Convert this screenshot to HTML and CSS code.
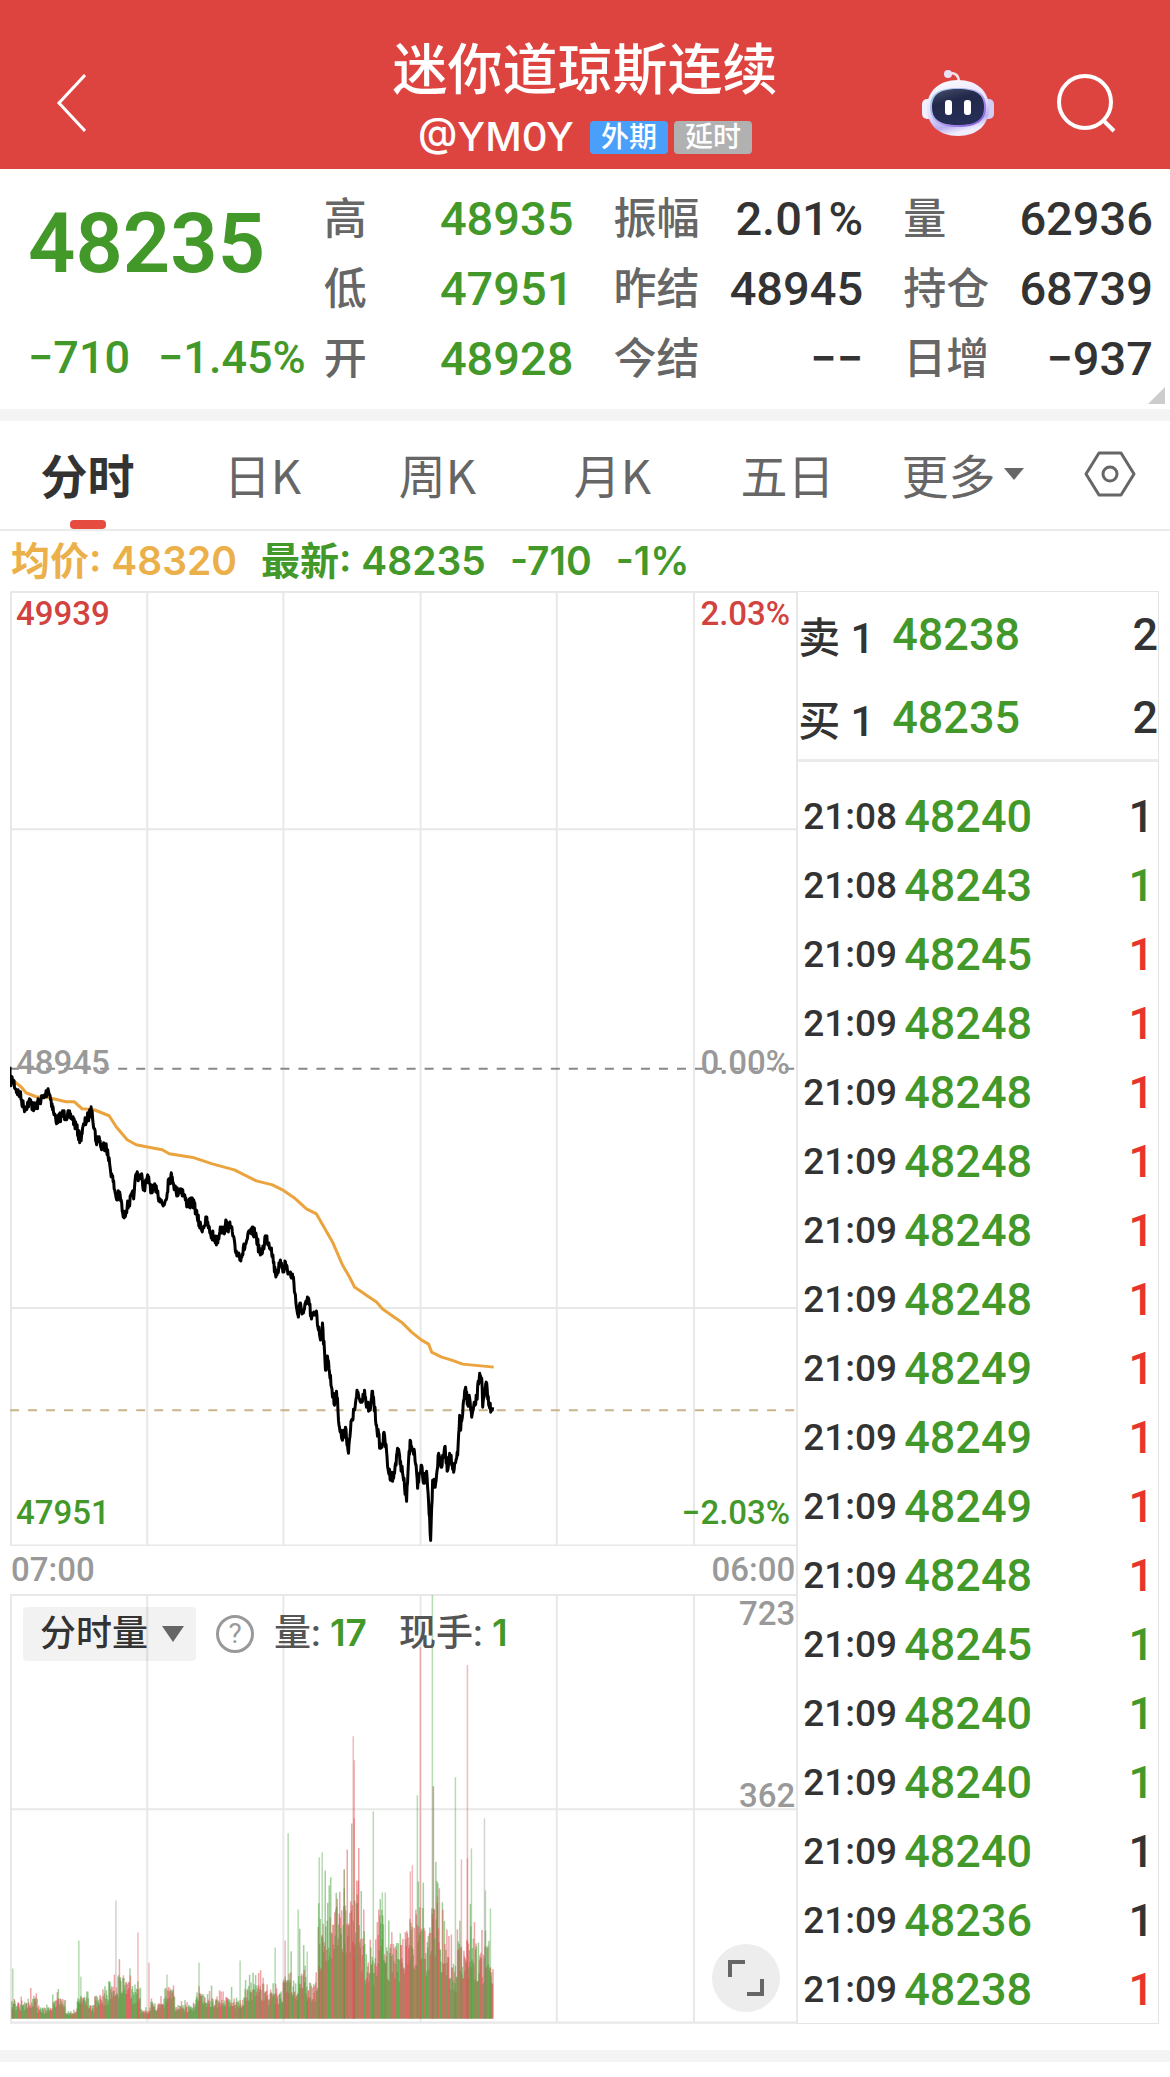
FILE: index.html
```html
<!DOCTYPE html>
<html lang="zh-CN">
<head>
    <meta charset="UTF-8">
    <meta name="viewport" content="width=device-width, initial-scale=1.0">
    <title>迷你道琼斯连续 @YM0Y</title>
    <link rel="stylesheet" href="styles.css">
</head>
<body>
    <header class="header">
        <a class="back" href="#" aria-label="返回">
            <svg width="32" height="60" viewBox="0 0 32 60"><path d="M31 2 5 30l26 28" fill="none" stroke="#fff" stroke-width="3"/></svg>
        </a>
        <div class="title">
            <h1>迷你道琼斯连续</h1>
            <div class="subtitle">
                <span class="code">@YM0Y</span>
                <span class="tag tag-blue">外期</span>
                <span class="tag tag-gray">延时</span>
            </div>
        </div>
        <div class="actions">
            <button aria-label="智能助手">
                <svg width="72" height="68" viewBox="0 0 72 68">
                    <defs>
                        <linearGradient id="shell" x1="0" y1="0" x2="0.3" y2="1">
                            <stop offset="0" stop-color="#fff"/>
                            <stop offset="0.6" stop-color="#e2defa"/>
                            <stop offset="0.85" stop-color="#b9aef0"/>
                            <stop offset="1" stop-color="#f0edfc"/>
                        </linearGradient>
                        <linearGradient id="rim" x1="0" y1="0" x2="1" y2="1">
                            <stop offset="0" stop-color="#9fd8ee"/>
                            <stop offset="0.5" stop-color="#b2a6ee"/>
                            <stop offset="1" stop-color="#7a50d6"/>
                        </linearGradient>
                        <linearGradient id="face" x1="0" y1="0" x2="0.4" y2="1">
                            <stop offset="0" stop-color="#4b4f6c"/>
                            <stop offset="0.4" stop-color="#22294a"/>
                            <stop offset="1" stop-color="#252e56"/>
                        </linearGradient>
                    </defs>
                    <path d="M27 4q9-1 10 8" fill="none" stroke="#f3dfe8" stroke-width="2.5"/>
                    <circle cx="26" cy="5" r="4" fill="#e9e2f4"/>
                    <rect x="0" y="30" width="12" height="20" rx="5" fill="#f1effb"/>
                    <rect x="60" y="30" width="12" height="20" rx="5" fill="#d3cdf3"/>
                    <path d="M36 11C55 11 67 22 67 39S55 67 36 67 5 56 5 39 17 11 36 11z" fill="url(#shell)"/>
                    <path d="M36 19c20 0 28 6 28 19s-8 20-28 20S8 51 8 38s8-19 28-19z" fill="url(#rim)"/>
                    <path d="M36 20c19 0 26 6 26 18s-7 18-26 18-26-6-26-18 7-18 26-18z" fill="url(#face)"/>
                    <rect x="23" y="31" width="7" height="15" rx="3" fill="#fff"/>
                    <rect x="42" y="31" width="7" height="15" rx="3" fill="#fff"/>
                </svg>
            </button>
            <button aria-label="搜索">
                <svg width="60" height="60" viewBox="0 0 60 60"><g fill="none" stroke="#fff" stroke-width="4"><circle cx="29" cy="29" r="26"/><path d="m47 47 11 11"/></g></svg>
            </button>
        </div>
    </header>

    <section class="quote">
        <div class="price">
            <div class="last">48235</div>
            <div class="change"><span>−710</span><span>−1.45%</span></div>
        </div>
        <dl class="stats">
            <div><dt>高</dt><dd class="green">48935</dd></div>
            <div><dt>振幅</dt><dd>2.01%</dd></div>
            <div><dt>量</dt><dd>62936</dd></div>
            <div><dt>低</dt><dd class="green">47951</dd></div>
            <div><dt>昨结</dt><dd>48945</dd></div>
            <div><dt>持仓</dt><dd>68739</dd></div>
            <div><dt>开</dt><dd class="green">48928</dd></div>
            <div><dt>今结</dt><dd>−−</dd></div>
            <div><dt>日增</dt><dd>−937</dd></div>
        </dl>
        <svg class="corner" width="17" height="17" viewBox="0 0 17 17"><path d="M17 0v17H0z" fill="#ccc"/></svg>
    </section>

    <nav class="tabs">
        <button class="active">分时</button>
        <button>日K</button>
        <button>周K</button>
        <button>月K</button>
        <button>五日</button>
        <button>更多<svg width="20" height="12" viewBox="0 0 20 12"><path d="M0 0h20L10 12z" fill="#666"/></svg></button>
        <button aria-label="设置">
            <svg width="52" height="46" viewBox="0 0 52 46"><g fill="none" stroke="#666" stroke-width="3"><path d="M15 2h22l13 21-13 21H15L2 23z" stroke-linejoin="round"/><circle cx="26" cy="23" r="7"/></g></svg>
        </button>
    </nav>

    <div class="info">
        <span class="orange">均价: 48320</span>
        <span class="green">最新: 48235</span>
        <span class="green">-710</span>
        <span class="green">-1%</span>
    </div>

    <main class="board">
        <div class="charts">
            <div class="price-chart">
                <svg viewBox="0 0 785 954">
                    <g class="grid">
                        <path d="M0 1H785M0 238H785M0 716H785M0 953H785M1 0V954M137 0V954M273 0V954M410 0V954M546 0V954M683 0V954"/>
                    </g>
                    <path class="zero-line" d="M0 477H785"/>
                    <path class="last-line" d="M0 818H785"/>
                    <polyline id="avg-line" class="avg"/>
                    <polyline id="price-line" class="trend"/>
                </svg>
                <span class="axis top left red">49939</span>
                <span class="axis top right red">2.03%</span>
                <span class="axis middle left">48945</span>
                <span class="axis middle right">0.00%</span>
                <span class="axis bottom left green">47951</span>
                <span class="axis bottom right green">−2.03%</span>
            </div>
            <div class="times"><span>07:00</span><span>06:00</span></div>
            <div class="volume-chart">
                <svg viewBox="0 0 785 429">
                    <g class="grid">
                        <path d="M0 1H785M0 215H785M0 428H785M1 0V429M137 0V429M273 0V429M410 0V429M546 0V429M683 0V429"/>
                    </g>
                    <g id="volume-bars"></g>
                </svg>
                <div class="volume-bar">
                    <label class="picker">
                        <select aria-label="指标"><option>分时量</option><option>持仓量</option></select>
                        <svg width="22" height="16" viewBox="0 0 22 16"><path d="M0 0h22L11 16z" fill="#666"/></svg>
                    </label>
                    <button class="help" aria-label="帮助">?</button>
                    <span>量: <b>17</b></span>
                    <span>现手: <b>1</b></span>
                </div>
                <span class="axis volume-max">723</span>
                <span class="axis volume-mid">362</span>
                <button class="expand" aria-label="全屏">
                    <svg width="36" height="36" viewBox="0 0 36 36"><path d="M2 17V2h15M34 19v15H19" fill="none" stroke="#666" stroke-width="4"/></svg>
                </button>
            </div>
        </div>
        <div class="trades">
            <table class="orders">
                <tr><th>卖 1</th><td class="green">48238</td><td>2</td></tr>
                <tr><th>买 1</th><td class="green">48235</td><td>2</td></tr>
            </table>
            <table class="ticks">
                <tr><th>21:08</th><td>48240</td><td>1</td></tr>
                <tr><th>21:08</th><td>48243</td><td class="green">1</td></tr>
                <tr><th>21:09</th><td>48245</td><td class="up">1</td></tr>
                <tr><th>21:09</th><td>48248</td><td class="up">1</td></tr>
                <tr><th>21:09</th><td>48248</td><td class="up">1</td></tr>
                <tr><th>21:09</th><td>48248</td><td class="up">1</td></tr>
                <tr><th>21:09</th><td>48248</td><td class="up">1</td></tr>
                <tr><th>21:09</th><td>48248</td><td class="up">1</td></tr>
                <tr><th>21:09</th><td>48249</td><td class="up">1</td></tr>
                <tr><th>21:09</th><td>48249</td><td class="up">1</td></tr>
                <tr><th>21:09</th><td>48249</td><td class="up">1</td></tr>
                <tr><th>21:09</th><td>48248</td><td class="up">1</td></tr>
                <tr><th>21:09</th><td>48245</td><td class="green">1</td></tr>
                <tr><th>21:09</th><td>48240</td><td class="green">1</td></tr>
                <tr><th>21:09</th><td>48240</td><td class="green">1</td></tr>
                <tr><th>21:09</th><td>48240</td><td>1</td></tr>
                <tr><th>21:09</th><td>48236</td><td>1</td></tr>
                <tr><th>21:09</th><td>48238</td><td class="up">1</td></tr>
            </table>
        </div>
    </main>
    <div class="divider"></div>
    <script src="chart.js"></script>
</body>
</html>
```

FILE: styles.css
```css
* {
    box-sizing: border-box;
}
body {
    margin: 0;
    background-color: #fff;
    color: #333;
    font-family: Roboto, "Noto Sans CJK SC", sans-serif;
    font-weight: 500;
}
button, select {
    border: none;
    background: none;
    padding: 0;
    margin: 0;
    color: inherit;
    font: inherit;
    cursor: pointer;
}
svg {
    display: block;
}
.green {
    color: #43982a;
}
.red {
    color: #d2423e;
}
.up {
    color: #e8342a;
}
.orange {
    color: #ecb04a;
}
.header {
    display: grid;
    grid-template-columns: 1fr auto 1fr;
    align-items: center;
    padding: 36px 54px 0;
    background-color: #dd4440;
    color: #fff;
}
.back {
    justify-self: start;
}
.title h1 {
    margin: 0;
    font-size: 55px;
    line-height: 69px;
    font-weight: 500;
    text-align: center;
}
.subtitle {
    display: flex;
    align-items: center;
    justify-content: center;
    height: 64px;
    gap: 6px;
}
.code {
    margin-right: 10px;
    font-family: Inter, sans-serif;
    font-size: 40px;
    line-height: 60px;
}
.tag {
    padding: 0 11px;
    border-radius: 4px;
    font-size: 28px;
    line-height: 33px;
}
.tag-blue {
    background-color: #4a9ffb;
}
.tag-gray {
    background-color: #b1b1b1;
}
.actions {
    display: flex;
    align-items: center;
    justify-self: end;
    gap: 62px;
}
.quote {
    position: relative;
    display: flex;
    padding: 15px 17px;
    border-bottom: 12px solid #f4f4f4;
    height: 252px;
}
.price {
    width: 27%;
    padding-left: 11px;
    color: #43982a;
    white-space: nowrap;
}
.last {
    margin-bottom: 20px;
    font-size: 83px;
    line-height: 119px;
    font-weight: 600;
}
.change {
    display: flex;
    gap: 28px;
    font-size: 45px;
    line-height: 70px;
}
.stats {
    display: grid;
    grid-template-columns: repeat(3, 1fr);
    column-gap: 40px;
    width: 73%;
    margin: 0;
}
.stats div {
    display: flex;
    justify-content: space-between;
    line-height: 70px;
}
.stats dt {
    font-size: 43px;
    color: #666;
}
.stats dd {
    margin: 0;
    font-size: 47px;
}
.corner {
    position: absolute;
    right: 5px;
    bottom: 5px;
}
.tabs {
    display: grid;
    grid-template-columns: repeat(6, 175fr) 120fr;
    border-bottom: 2px solid #ebebeb;
    font-family: "Noto Sans CJK SC", sans-serif;
    font-size: 47px;
    line-height: 64px;
    font-weight: 400;
    color: #666;
}
.tabs button {
    position: relative;
    display: flex;
    align-items: center;
    justify-content: center;
    gap: 8px;
    height: 108px;
    padding-bottom: 2px;
    white-space: nowrap;
}
.tabs .active {
    color: #333;
    font-weight: 700;
}
.tabs .active::after {
    content: "";
    position: absolute;
    bottom: 0;
    width: 36px;
    height: 9px;
    border-radius: 4px;
    background-color: #e54b3f;
}
.info {
    display: flex;
    gap: 24px;
    padding: 0 11px;
    font-family: Inter, "Noto Sans CJK SC", sans-serif;
    font-size: 39px;
    font-weight: 600;
    line-height: 60px;
}
.board {
    display: grid;
    grid-template-columns: 13fr 6fr;
    padding: 0 11px 26px 10px;
}
.price-chart, .volume-chart {
    position: relative;
}
.price-chart svg, .volume-chart > svg {
    width: 100%;
}
.grid path {
    fill: none;
    stroke: #e8e8e8;
    stroke-width: 2;
}
.zero-line {
    stroke: #888;
    stroke-width: 2;
    stroke-dasharray: 9 9;
}
.last-line {
    stroke: #c9b48c;
    stroke-width: 2;
    stroke-dasharray: 9 9;
}
.avg {
    fill: none;
    stroke: #eba43d;
    stroke-width: 3;
    stroke-linejoin: round;
}
.trend {
    fill: none;
    stroke: #000;
    stroke-width: 3;
    stroke-linejoin: round;
}
.axis {
    position: absolute;
    font-size: 33px;
    line-height: 40px;
    color: #999;
}
.axis.red {
    color: #d2423e;
}
.axis.green {
    color: #43982a;
}
.left {
    left: 6px;
}
.right {
    right: 6px;
}
.top {
    top: 3px;
}
.middle {
    bottom: 463px;
}
.bottom {
    bottom: 13px;
}
.times {
    display: flex;
    justify-content: space-between;
    padding: 0 1px;
    font-size: 33px;
    line-height: 48px;
    color: #999;
}
.volume-bar {
    position: absolute;
    top: 12px;
    left: 13px;
    display: flex;
    align-items: center;
    color: #555;
    font-size: 37px;
    line-height: 54px;
}
.volume-bar > span {
    margin-right: 32px;
}
.volume-bar b {
    color: #43982a;
    font-family: Inter, sans-serif;
    font-weight: 600;
}
.picker {
    display: flex;
    align-items: center;
    height: 54px;
    padding: 0 12px 0 17px;
    border-radius: 4px;
    background-color: rgba(0, 0, 0, 0.05);
    color: #333;
    font-size: 36px;
}
.picker select {
    appearance: none;
    width: 122px;
    line-height: 54px;
}
.help {
    width: 38px;
    height: 38px;
    margin: 0 20px;
    border: 3px solid #999;
    border-radius: 50%;
    font-size: 28px;
    line-height: 30px;
    font-weight: 400;
    color: #999;
}
.volume-max {
    top: 0;
    right: 1px;
}
.volume-mid {
    bottom: 208px;
    right: 1px;
}
.expand {
    position: absolute;
    right: 16px;
    bottom: 12px;
    display: flex;
    align-items: center;
    justify-content: center;
    width: 68px;
    height: 68px;
    border-radius: 50%;
    background-color: #ededed;
}
.trades {
    border: 1px solid #e4e4e4;
    border-left: 2px solid #e8e8e8;
}
table {
    width: 100%;
    border-collapse: collapse;
    table-layout: fixed;
}
th, td {
    padding: 0;
    text-align: left;
    font-weight: 500;
    white-space: nowrap;
}
td:last-child {
    text-align: right;
}
.orders {
    border-bottom: 3px solid #ebebeb;
    font-size: 45px;
}
.orders tr {
    height: 84px;
}
.orders th {
    width: 94px;
    font-size: 42px;
}
.ticks {
    margin-top: 17px;
    font-size: 45px;
}
.ticks tr {
    height: 69px;
    line-height: 60px;
}
.ticks th, .ticks td {
    padding-top: 8px;
}
.ticks th {
    width: 106px;
    padding-left: 5px;
    font-size: 37px;
}
.ticks td:nth-child(2) {
    color: #43982a;
}
.ticks td:last-child {
    padding-right: 4px;
}
.divider {
    height: 12px;
    background-color: #f4f4f4;
}
```

FILE: chart.js
```js
const avgPoints = [
    [2, 488], [11, 495], [16, 501], [26, 505], [39, 506], [56, 510], [64, 510], [72, 517], [84, 518], [99, 524],
    [106, 535], [117, 548], [126, 553], [136, 555], [152, 558], [159, 562], [184, 566], [202, 572], [224, 578],
    [246, 589], [262, 593], [272, 598], [284, 606], [296, 617], [306, 622], [322, 650], [332, 673], [339, 685],
    [344, 695], [357, 704], [366, 710], [372, 717], [392, 731], [401, 740], [411, 748], [418, 752], [421, 760],
    [431, 765], [441, 768], [452, 772], [483, 775]
];

const pricePoints = [
    [0, 475], [0, 490], [3, 488], [6, 498], [10, 503], [14, 516], [20, 510], [25, 517], [30, 508], [34, 506],
    [38, 497], [41, 508], [44, 523], [47, 529], [52, 523], [62, 525], [66, 535], [70, 548], [74, 533], [79, 523],
    [82, 519], [86, 550], [89, 545], [91, 556], [96, 552], [98, 565], [102, 585], [106, 606], [110, 603],
    [113, 625], [117, 615], [124, 601], [126, 582], [131, 585], [134, 596], [138, 586], [142, 601], [146, 594],
    [149, 606], [153, 614], [157, 601], [158, 588], [162, 585], [166, 601], [171, 597], [176, 610], [184, 612],
    [187, 626], [191, 637], [196, 629], [200, 641], [207, 650], [210, 635], [213, 641], [215, 633], [221, 636],
    [225, 659], [231, 664], [236, 650], [240, 640], [245, 641], [250, 663], [253, 656], [255, 644], [261, 656],
    [265, 682], [271, 671], [273, 678], [275, 670], [278, 681], [283, 685], [286, 715], [288, 725], [289, 713],
    [293, 721], [298, 706], [301, 727], [306, 719], [308, 738], [311, 747], [312, 731], [315, 778], [317, 764],
    [319, 780], [324, 813], [326, 799], [329, 835], [332, 848], [335, 835], [338, 861], [341, 828], [344, 818],
    [347, 800], [350, 810], [354, 798], [356, 815], [360, 816], [362, 799], [366, 833], [370, 856], [374, 843],
    [378, 880], [383, 886], [387, 856], [392, 881], [396, 909], [398, 868], [400, 849], [404, 861], [407, 896],
    [411, 873], [413, 891], [416, 879], [419, 925], [420, 948], [422, 888], [425, 891], [428, 861], [431, 875],
    [434, 855], [437, 878], [439, 861], [443, 880], [447, 863], [449, 823], [450, 838], [455, 795], [457, 811],
    [459, 806], [461, 825], [466, 806], [469, 781], [471, 786], [472, 815], [476, 791], [478, 813], [481, 817],
    [482, 815]
];

// x, height, colour of the tall bars
const peaks = [
    [2, 50, 'g'], [68, 78, 'g'], [70, 42, 'g'], [105, 118, 'n'], [127, 86, 'r'], [138, 56, 'r'], [156, 44, 'g'],
    [188, 56, 'g'], [229, 58, 'g'], [264, 71, 'g'], [274, 78, 'r'], [277, 185, 'g'], [287, 109, 'g'], [296, 67, 'g'],
    [308, 161, 'g'], [311, 166, 'g'], [333, 149, 'r'], [333, 149, 'g'], [342, 282, 'r'], [343, 258, 'r'],
    [343, 200, 'r'], [362, 207, 'g'], [371, 126, 'g'], [374, 126, 'g'], [399, 147, 'r'], [401, 153, 'r'],
    [406, 223, 'g'], [409, 371, 'r'], [421, 423, 'g'], [422, 232, 'r'], [422, 232, 'n'], [426, 122, 'r'],
    [444, 241, 'g'], [450, 159, 'r'], [456, 353, 'r'], [456, 160, 'r'], [460, 170, 'g'], [473, 200, 'n'],
    [474, 128, 'g'], [479, 110, 'g']
];

// x, usual bar height from there on
const levels = [
    [0, 14], [20, 18], [27, 9], [42, 18], [55, 5], [66, 18], [80, 11], [84, 20], [98, 34], [120, 26], [130, 7],
    [140, 13], [154, 26], [164, 11], [185, 22], [194, 18], [234, 30], [255, 22], [272, 42], [281, 32], [288, 46],
    [295, 26], [307, 84], [315, 94], [325, 106], [350, 84], [354, 56], [366, 92], [375, 64], [394, 86], [408, 74],
    [420, 98], [429, 62], [438, 44], [446, 66], [465, 56], [473, 72], [478, 48]
];

const colors = { g: '#43a035', r: '#e04a50', n: '#888' };
const baseline = 424;
const bars = document.getElementById('volume-bars');

let seed = 7;
function random() {
    seed = (seed * 16807) % 2147483647;
    return seed / 2147483647;
}

function toPoints(list) {
    return list.map(p => p.join(',')).join(' ');
}

// small ticks between the main turns of the line
function addTicks(list) {
    const out = [];
    for (let i = 0; i < list.length - 1; i++) {
        const [x1, y1] = list[i];
        const [x2, y2] = list[i + 1];
        out.push([x1, y1]);
        for (let x = x1 + 0.5; x < x2; x += 0.5) {
            const y = y1 + (y2 - y1) * (x - x1) / (x2 - x1);
            out.push([x, Math.round(y + (random() - 0.5) * 11)]);
        }
    }
    out.push(list[list.length - 1]);
    return out;
}

function drawBar(x, height, color, opacity) {
    const rect = document.createElementNS('http://www.w3.org/2000/svg', 'rect');
    rect.setAttribute('x', x);
    rect.setAttribute('y', baseline - height);
    rect.setAttribute('width', 1.5);
    rect.setAttribute('height', height);
    rect.setAttribute('fill', colors[color]);
    rect.setAttribute('fill-opacity', opacity);
    bars.appendChild(rect);
}

document.getElementById('avg-line').setAttribute('points', toPoints(avgPoints));
document.getElementById('price-line').setAttribute('points', toPoints(addTicks(pricePoints)));

for (let x = 1; x < 482; x += 0.5) {
    const level = levels.filter(l => l[0] <= x).pop()[1];
    const height = level * (0.55 + random() * 0.65 + Math.pow(random(), 6) * 0.8);
    drawBar(x, height, random() < 0.55 ? 'g' : 'r', 0.5);
}
peaks.forEach(p => drawBar(p[0], p[1], p[2], 0.38));
```
